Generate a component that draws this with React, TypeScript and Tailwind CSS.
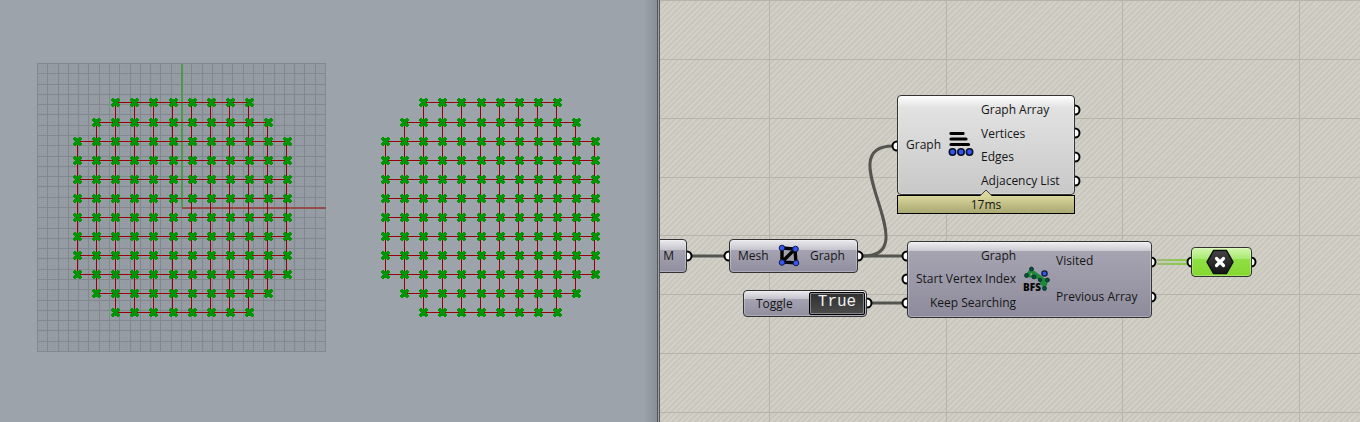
import React, { useState } from "react";

const COLUMNS = Array.from({ length: 12 }, (_, i) => i);
const MARKER =
  "M1 0h2v1h3v-1h2v1h1v2h-1v1h-1v1h1v1h1v2h-1v1h-2v-1h-3v1h-2v-1h-1v-2h1v-1h1v-1h-1v-1h-1v-2h1z";

function inset(index: number) {
  const edge = Math.min(index, 11 - index);
  return edge === 0 ? 2 : edge === 1 ? 1 : 0;
}

function MeshGraph({ left, top }: { left: number; top: number }) {
  const lineX = (i: number) => left + i * 19;
  const markX = (i: number) => Math.round(left + i * 19.1);
  const y = (i: number) => top + i * 19 + (i > 0 ? 1 : 0);
  return (
    <g shapeRendering="crispEdges">
      {COLUMNS.map((i) => {
        const a = inset(i);
        const b = 11 - a;
        return (
          <g key={i} fill="#940004">
            <rect x={lineX(a)} y={y(i)} width={lineX(b) - lineX(a)} height="1" />
            <rect x={lineX(i)} y={y(a)} width="1" height={y(b) - y(a)} />
          </g>
        );
      })}
      {COLUMNS.map((row) =>
        COLUMNS.filter((c) => c >= inset(row) && c <= 11 - inset(row)).map((c) => (
          <path
            key={`${row}-${c}`}
            d={MARKER}
            fill="#039403"
            transform={`translate(${markX(c) - 4} ${y(row) - 4})`}
          />
        )),
      )}
    </g>
  );
}

function Viewport() {
  const lines = Array.from({ length: 29 }, (_, i) => Math.round((i * 288) / 28));
  return (
    <section
      aria-label="Top viewport"
      className="overflow-hidden border-r-3 border-double border-[#555] bg-[#9da3aa] bg-linear-to-r from-transparent from-98% to-[#868e97]"
    >
      <svg width="657" height="422" viewBox="0 0 657 422" className="block max-w-none">
        <defs>
          <pattern id="minor" width="2" height="2" patternUnits="userSpaceOnUse">
            <rect width="2" height="2" fill="#949aa1" />
            <rect width="1" height="1" fill="#9aa0a7" />
          </pattern>
        </defs>
        <rect x="37" y="63" width="289" height="289" fill="url(#minor)" />
        <g fill="#83888f" shapeRendering="crispEdges">
          {lines.map((p) => (
            <g key={p}>
              <rect x={37 + p} y="63" width="1" height="289" />
              <rect x="37" y={63 + p} width="289" height="1" />
            </g>
          ))}
        </g>
        <rect x="181" y="64" width="2" height="144" fill="#4b9b4b" />
        <rect x="182" y="207" width="144" height="2" fill="#964b4b" />
        <MeshGraph left={77} top={102} />
        <MeshGraph left={385} top={102} />
      </svg>
    </section>
  );
}

function Port({ x, y }: { x: number; y: number }) {
  return <circle cx={x} cy={y} r="4.5" fill="#fff" stroke="#000" strokeWidth="2" />;
}

const PORTS: [number, number][] = [
  [27, 256], [69, 256], [198, 256], [207, 303],
  [237, 146], [415, 110], [415, 133], [415, 157], [415, 181],
  [247, 256], [247, 279], [247, 303], [491, 262], [491, 297],
  [532, 262], [591, 262],
];

function Wires() {
  return (
    <svg width="700" height="422" viewBox="0 0 700 422" className="block max-w-none">
      <defs>
        <linearGradient id="flow">
          <stop stopColor="#a0b880" />
          <stop offset="1" stopColor="#83cf3c" />
        </linearGradient>
      </defs>
      <g fill="#b8b4ac" shapeRendering="crispEdges">
        {[109, 286, 462, 639].map((x) => (
          <rect key={x} x={x} y="0" width="1" height="422" />
        ))}
        {[0, 59, 118, 177, 235, 294, 353, 412].map((y) => (
          <rect key={y} x="0" y={y} width="700" height="1" />
        ))}
      </g>
      <g fill="none" stroke="#555550" strokeWidth="3">
        <path d="M32 256H64M203 256H243M212 303H243" />
        <path d="M203 256C268 256 168 146 233 146" />
      </g>
      <rect x="497" y="259" width="31" height="6" fill="#c3cdb0" />
      <rect x="497" y="259" width="31" height="2" fill="url(#flow)" />
      <rect x="497" y="263" width="31" height="2" fill="url(#flow)" />
      {PORTS.map(([x, y]) => (
        <Port key={`${x}-${y}`} x={x} y={y} />
      ))}
    </svg>
  );
}

function MeshIcon() {
  return (
    <svg width="24" height="24" viewBox="0 0 24 24" aria-hidden="true">
      <path d="M5 4L18 5L19 19L5 18ZM5 18L18 5" fill="none" stroke="#000" strokeWidth="3.4" />
      <g fill="#3457f0" stroke="#111a50" strokeWidth="1">
        <circle cx="5" cy="4" r="2.8" />
        <circle cx="18.5" cy="5" r="2.8" />
        <circle cx="5" cy="18.5" r="2.8" />
        <circle cx="19" cy="19" r="2.8" />
      </g>
    </svg>
  );
}

function ListIcon() {
  return (
    <svg width="26" height="26" viewBox="0 0 26 26" aria-hidden="true">
      <path d="M3 1.5H15M3 7H18M3 12.500H20.500" stroke="#000" strokeWidth="3.2" strokeLinecap="round" />
      <g fill="#3457f0" stroke="#0b0f28" strokeWidth="1.6">
        <circle cx="4.5" cy="20" r="3.2" />
        <circle cx="13" cy="20" r="3.2" />
        <circle cx="21.5" cy="20" r="3.2" />
      </g>
    </svg>
  );
}

function SearchIcon() {
  return (
    <svg width="28" height="28" viewBox="0 0 28 28" aria-hidden="true" className="overflow-visible">
      <path d="M4.500 9.500L9.500 3L12 11ZM9.500 3L12 11L25 14L18 14L22.500 22L25 14" fill="#1c8a35" stroke="#1c8a35" strokeWidth="2.6" strokeLinejoin="round" />
      <path d="M8 9L9.500 6.500L10 9Z" fill="#a09eac" />
      <g fill="#0c5a2c" stroke="#0a2a3a" strokeWidth="1">
        <circle cx="4.5" cy="9.5" r="1.9" />
        <circle cx="9.5" cy="3" r="1.9" />
        <circle cx="12" cy="11" r="1.9" />
        <circle cx="18" cy="14" r="1.6" />
        <circle cx="25.500" cy="14" r="1.9" />
        <circle cx="22.500" cy="22.500" r="1.9" />
      </g>
      <circle cx="22.500" cy="7.500" r="2.6" fill="#3457f0" stroke="#10183f" strokeWidth="1.3" />
      <text x="1" y="25" fontFamily="'Open Sans', sans-serif" fontSize="10" fontWeight="800" fill="#0a0a0a">BFS</text>
    </svg>
  );
}

function CrossHexIcon() {
  return (
    <svg width="30" height="26" viewBox="0 0 30 26" aria-hidden="true">
      <defs>
        <linearGradient id="hex" x2="0" y2="1">
          <stop stopColor="#444" />
          <stop offset="1" stopColor="#151515" />
        </linearGradient>
      </defs>
      <path d="M8.500 1.500H21.500L28 13L21.500 24.500H8.500L2 13Z" fill="url(#hex)" stroke="#101010" strokeWidth="1.5" strokeLinejoin="round" />
      <path d="M11.500 9.500L18.500 16.500M18.500 9.500L11.500 16.500" stroke="#fff" strokeWidth="3.2" strokeLinecap="round" />
    </svg>
  );
}

const NODE =
  "absolute flex items-center rounded-[4px] border border-[#333] shadow-[inset_0_0_0_1px_rgba(255,255,255,0.25)]";
const SHORT = "bg-[linear-gradient(#eaeaee,#c6c5cd_30%,#a6a4b2_30%,#918f9f)]";

function Canvas() {
  const [on, setOn] = useState(true);
  return (
    <section
      aria-label="Node canvas"
      className="relative overflow-hidden bg-[#d0cdc5] bg-[repeating-linear-gradient(135deg,#d3d0c8_0px,#d3d0c8_2px,#c9c6bd_2px,#c9c6bd_4px)]"
    >
      <Wires />

      <div className={`${NODE} ${SHORT} top-[239px] left-[-20px] h-[34px] w-[47px] justify-end pr-3`}>M</div>

      <div className={`${NODE} ${SHORT} top-[239px] left-[69px] h-[34px] w-[129px] justify-between pr-3 pl-2`}>
        <span>Mesh</span>
        <MeshIcon />
        <span>Graph</span>
      </div>

      <div className={`${NODE} ${SHORT} top-[290px] left-[83px] h-[27px] w-[124px] justify-between pr-px pl-3`}>
        <label htmlFor="toggle">Toggle</label>
        <button
          id="toggle"
          type="button"
          aria-pressed={on}
          onClick={() => setOn(!on)}
          className="h-[23px] w-14 rounded-[2px] border border-black bg-linear-to-b from-[#303030] to-[#4c4c4c] pb-1 font-['Liberation_Mono',monospace] text-base leading-4 text-[#eee] outline -outline-offset-2 outline-[#858585]"
        >
          {on ? "True" : "False"}
        </button>
      </div>

      <div className={`${NODE} top-[95px] left-[237px] h-[100px] w-[178px] gap-[7px] bg-linear-to-b from-white from-0% via-[#e2e2e2] via-12% to-[#c8c8c8] pl-2`}>
        <span>Graph</span>
        <ListIcon />
        <div className="flex h-full flex-col justify-around pt-0.5 pb-px">
          <span>Graph Array</span>
          <span>Vertices</span>
          <span>Edges</span>
          <span>Adjacency List</span>
        </div>
      </div>
      <div className="absolute top-[195px] left-[237px] flex h-[19px] w-[178px] items-center justify-center border border-black bg-linear-to-b from-[#d9d79b] to-[#aaa873]">
        17ms
      </div>
      <svg width="14" height="8" viewBox="0 0 14 8" className="absolute top-[189px] left-[319px]" aria-hidden="true">
        <path d="M1 7L7 1L13 7" fill="#d9d79b" stroke="#444" />
      </svg>

      <div className={`${NODE} top-[241px] left-[247px] h-[77px] w-[245px] gap-[6px] bg-[linear-gradient(#efeff2,#cac9d1_12%,#a6a4b1_12%,#8e8c9c)] pl-2`}>
        <div className="flex h-full flex-col items-end justify-around py-0.5">
          <span>Graph</span>
          <span>Start Vertex Index</span>
          <span>Keep Searching</span>
        </div>
        <SearchIcon />
        <div className="flex h-full flex-col justify-around pt-px pb-0.5">
          <span>Visited</span>
          <span>Previous Array</span>
        </div>
      </div>

      <div className={`${NODE} top-[247px] left-[531px] h-[30px] w-[61px] justify-center border-[#1f4a10] bg-[linear-gradient(#d2f7ac,#a9e973_38%,#8fe044_38%,#84d830)] pr-1`}>
        <CrossHexIcon />
      </div>
    </section>
  );
}

export default function App() {
  return (
    <main className="grid min-h-screen grid-cols-[33fr_35fr] overflow-hidden font-['Open_Sans',sans-serif] text-xs leading-4 whitespace-nowrap text-[#161616]">
      <Viewport />
      <Canvas />
    </main>
  );
}
